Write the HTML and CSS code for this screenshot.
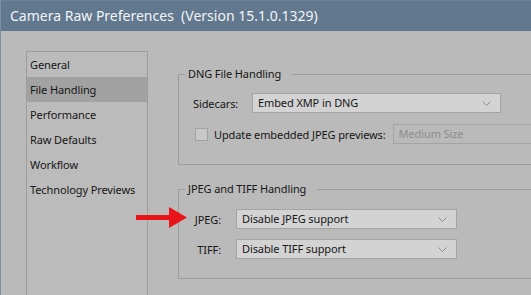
FILE: index.html
```html
<!DOCTYPE html>
<html lang="en">
<head>
    <meta charset="UTF-8">
    <title>Camera Raw Preferences</title>
    <link rel="stylesheet" href="styles.css">
</head>
<body>
    <div class="window">
        <div class="titlebar">Camera Raw Preferences&nbsp; (Version 15.1.0.1329)</div>
        <div class="content">
            <ul class="nav">
                <li>General</li>
                <li class="active">File Handling</li>
                <li>Performance</li>
                <li>Raw Defaults</li>
                <li>Workflow</li>
                <li>Technology Previews</li>
            </ul>
            <div class="panel">
                <fieldset class="group">
                    <legend>DNG File Handling</legend>
                    <div class="row sidecars">
                        <span class="label">Sidecars:</span>
                        <div class="dropdown wide">Embed XMP in DNG
                            <svg class="chev" width="9" height="5" viewBox="0 0 9 5"><path d="M0.5 0.5 L4.5 4.5 L8.5 0.5" fill="none" stroke="#8c8c8c" stroke-width="1"/></svg>
                        </div>
                    </div>
                    <div class="row previews">
                        <span class="checkbox"></span>
                        <span class="label">Update embedded JPEG previews:</span>
                        <div class="dropdown disabled">Medium Size
                            <svg class="chev" width="9" height="5" viewBox="0 0 9 5"><path d="M0.5 0.5 L4.5 4.5 L8.5 0.5" fill="none" stroke="#9c9c9c" stroke-width="1"/></svg>
                        </div>
                    </div>
                </fieldset>
                <fieldset class="group jpeg">
                    <legend>JPEG and TIFF Handling</legend>
                    <div class="row">
                        <span class="label short">JPEG:</span>
                        <div class="dropdown medium">Disable JPEG support
                            <svg class="chev" width="9" height="5" viewBox="0 0 9 5"><path d="M0.5 0.5 L4.5 4.5 L8.5 0.5" fill="none" stroke="#8c8c8c" stroke-width="1"/></svg>
                        </div>
                        <svg class="arrow" width="52" height="22" viewBox="0 0 52 22"><path d="M0 8 H33 V0 L51 10.5 L33 21 V13 H0 Z" fill="#e8141a"/></svg>
                    </div>
                    <div class="row">
                        <span class="label short">TIFF:</span>
                        <div class="dropdown medium">Disable TIFF support
                            <svg class="chev" width="9" height="5" viewBox="0 0 9 5"><path d="M0.5 0.5 L4.5 4.5 L8.5 0.5" fill="none" stroke="#8c8c8c" stroke-width="1"/></svg>
                        </div>
                    </div>
                </fieldset>
            </div>
        </div>
    </div>
</body>
</html>
```

FILE: styles.css
```css
body {
    margin: 0;
    font-family: "Noto Sans", "Open Sans", sans-serif;
    font-size: 11px;
    letter-spacing: -0.1px;
    color: #161616;
    background: #bababa;
    overflow: hidden;
}
.window {
    height: 295px;
    border-left: 1px solid #7f90a3;
    overflow: hidden;
}
.titlebar {
    height: 30px;
    border-top: 1px solid #6c8197;
    background: #61788f;
    color: #f2f4f6;
    font-size: 14px;
    letter-spacing: 0;
    line-height: 30px;
    padding-left: 9px;
}
.content {
    display: flex;
    padding: 20px 0 0 25px;
}
.nav {
    list-style: none;
    margin: 0;
    padding: 0;
    width: 120px;
    height: 260px;
    flex-shrink: 0;
    border: 1px solid #9d9d9d;
    background: #bbbbbb;
}
.nav li {
    height: 25px;
    line-height: 25px;
    padding-left: 3px;
}
.nav li.active {
    background: #a2a2a2;
}
.panel {
    margin-left: 30px;
    padding-top: 15px;
    width: 380px;
    flex-shrink: 0;
}
.group {
    margin: 0;
    padding: 0 0 0 14px;
    border: 1px solid #9d9d9d;
    height: 97px;
}
.group legend {
    margin-left: -8px;
    padding: 0 11px 0 3px;
    line-height: 16px;
}
.jpeg {
    margin-top: 16px;
    height: 96px;
}
.row {
    display: flex;
    align-items: center;
    position: relative;
}
.sidecars {
    margin-top: 11px;
}
.previews {
    margin-top: 11px;
}
.label {
    white-space: nowrap;
}
.sidecars .label {
    width: 59px;
}
.short {
    width: 28px;
    text-align: right;
    margin-right: 15px;
}
.jpeg .row:first-of-type {
    margin-top: 12px;
}
.jpeg .row + .row {
    margin-top: 10px;
}
.checkbox {
    width: 11px;
    height: 11px;
    border: 1px solid #a2a2a2;
    background: #c8c8c8;
    margin: 0 6px 0 2px;
}
.dropdown {
    position: relative;
    box-sizing: border-box;
    height: 20px;
    line-height: 18px;
    padding-left: 5px;
    border: 1px solid #a3a3a3;
    background: #d3d3d3;
    white-space: nowrap;
}
.wide {
    width: 249px;
}
.medium {
    width: 221px;
}
.disabled {
    margin-left: 7px;
    width: 160px;
    background: #bababa;
    color: #8d8d8d;
}
.chev {
    position: absolute;
    right: 9px;
    top: 7px;
}
.arrow {
    position: absolute;
    left: -57px;
    top: -2px;
}
```
